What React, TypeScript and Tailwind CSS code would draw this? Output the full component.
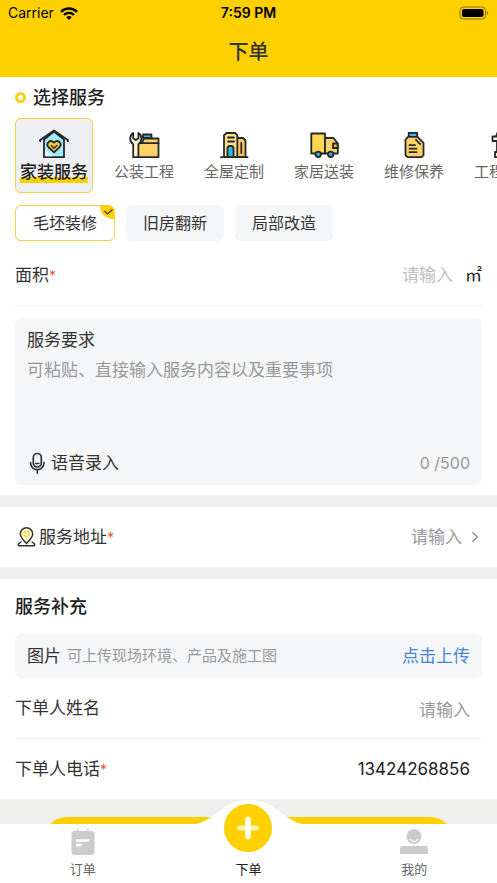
import { useState } from "react"
import type { ReactNode } from "react"
import { ChevronRight } from "lucide-react"

interface Service {
  label: string
  icon: ReactNode
}

interface TabButtonProps {
  label: string
  active?: boolean
  icon: ReactNode
}

function ServiceIcon({ children }: { children: ReactNode }) {
  return (
    <svg
      viewBox="0 0 30 30"
      className="w-[30px] h-[30px] shrink-0 overflow-visible"
      fill="none"
      stroke="#25282b"
      strokeWidth="1.8"
      strokeLinejoin="round"
      strokeLinecap="round"
      aria-hidden="true"
    >
      {children}
    </svg>
  )
}

const services: Service[] = [
  {
    label: "家装服务",
    icon: (
      <ServiceIcon>
        <path d="M5 10.5 15 2.5l10 8v17.7H5z" fill="#a5ecfa" />
        <path d="M6 20v7.3h8z" fill="#e3fafe" stroke="none" />
        <path d="M1.200 12.300V11L15 1.500 28.800 11v1.300" strokeWidth="2" />
        <path
          d="M15 23.400l-5.200-4.900c-3.800-4 1.200-8.900 5.200-4.800 4-4.100 9 .8 5.200 4.800z"
          fill="#fdc441"
        />
        <path d="M12.500 16.800l2.500 2.400 3-2.700" strokeWidth="1.4" />
      </ServiceIcon>
    ),
  },
  {
    label: "公装工程",
    icon: (
      <ServiceIcon>
        <path d="M14 9V5.500h8.500V9z" fill="#39b5de" />
        <path d="M9 28.200V14h4l2-4.500h14.500v18.700z" fill="#fdd368" />
        <path d="M13.500 14.200h16" />
        <path
          d="M4.200 28.200V15.300C.2 12.800.2 6.200 4.200 4v5.300l2.600 1.800 2.600-1.800V4c4 2.200 4 8.800 0 11.300v12.900z"
          fill="#fff3cf"
        />
      </ServiceIcon>
    ),
  },
  {
    label: "全屋定制",
    icon: (
      <ServiceIcon>
        <path d="M18 9h6l2.500 2.500v16.700H18z" fill="#fdc65a" />
        <path d="M5 28.200v-22L7.500 4H16l2.300 2.200v22z" fill="#fde08a" />
        <path d="M8.500 28.200V18.500L10 17h3l1.500 1.500v9.700z" fill="#39b5de" />
        <path d="M9 8.500h6M9 12.500h6M22.300 14v10M2 28.200h26.500" />
      </ServiceIcon>
    ),
  },
  {
    label: "家居送装",
    icon: (
      <ServiceIcon>
        <path d="M2.300 4.500H16v20H2.300z" fill="#fdd54f" />
        <path d="M16 9h8.500l4.300 5.500v10H16z" fill="#fdd368" />
        <path d="M28.500 14.500H24v4.500h4.800z" fill="#fdb92e" />
        <circle cx="9.2" cy="25.3" r="2.7" fill="#39b5de" />
        <circle cx="21.7" cy="25.3" r="2.7" fill="#39b5de" />
      </ServiceIcon>
    ),
  },
  {
    label: "维修保养",
    icon: (
      <ServiceIcon>
        <path d="M9.700 3.800h8.500v4H9.700z" fill="#39b5de" />
        <path d="M6.500 10.500L9 7.800h9.500l6 6v12.400l-2 2h-14l-2-2z" fill="#fdd368" />
        <path d="M10.500 16.200h5.500M10.500 19.700h7M10.500 23.200h7M17 10.800l4.200 4.300" />
      </ServiceIcon>
    ),
  },
  {
    label: "工程监理",
    icon: (
      <ServiceIcon>
        <path d="M7 7.500L8.500 3.500h13L23 7.500z" fill="#39b5de" />
        <path d="M3.500 7.500h23V12h-23z" fill="#fff3cf" />
        <path d="M8 12h14v11H8z" fill="#fdd368" />
        <path d="M6 23h18v5.200H6z" fill="#fff3cf" />
      </ServiceIcon>
    ),
  },
]

const serviceTypes = ["毛坯装修", "旧房翻新", "局部改造"]

function Required() {
  return <span className="text-sm text-[#f0562e]">*</span>
}

function StatusBar() {
  return (
    <div className="h-[26px] px-2 grid grid-cols-3 items-center text-sm text-black">
      <div className="flex items-center gap-1.5">
        <span>Carrier</span>
        <svg viewBox="0 0 18 13" className="w-[18px] h-[13px]" fill="none" stroke="#000" strokeWidth="2.4">
          <path d="M1 4.800a11.300 11.300 0 0 1 16 0" />
          <path d="M4 8a7 7 0 0 1 10 0" />
          <path d="M6.300 10.300a3.800 3.800 0 0 1 5.400 0L9 13z" fill="#000" stroke="none" />
        </svg>
      </div>
      <span className="text-center font-semibold">7:59 PM</span>
      <svg viewBox="0 0 30 14" className="w-[30px] h-[14px] justify-self-end">
        <rect x="1" y="1" width="25.5" height="12" rx="3.5" fill="none" stroke="#8a7200" />
        <rect x="3" y="3" width="21.5" height="8" rx="1.8" fill="#000" />
        <path d="M28 5v4c1.600-.6 1.600-3.400 0-4z" fill="#8a7200" />
      </svg>
    </div>
  )
}

function TabButton({ label, active, icon }: TabButtonProps) {
  return (
    <button
      type="button"
      className={`flex flex-col items-center justify-end pb-1 text-[13px] leading-5 ${
        active ? "text-[#222]" : "text-[#666]"
      }`}
    >
      {icon}
      <span>{label}</span>
    </button>
  )
}

function TabBar() {
  return (
    <nav className="relative shrink-0 h-[59px] bg-white grid grid-cols-3 grid-rows-1">
      {/* white hump behind the round add button */}
      <svg
        viewBox="0 0 140 25"
        className="absolute left-1/2 -translate-x-1/2 -top-6 w-[140px] h-[25px]"
        aria-hidden="true"
      >
        <path d="M8 25C36 25 40 0 70 0s34 25 62 25z" fill="#fff" />
      </svg>
      <TabButton
        label="订单"
        icon={
          <svg viewBox="0 0 24 26" className="shrink-0 w-6 h-[26px] mb-1" aria-hidden="true">
            <rect x="0.5" y="2" width="23" height="24" rx="3" fill="#ccc" />
            <path d="M6.500 0v4M17 0v4" stroke="#ccc" strokeWidth="1.6" />
            <path d="M5 11.500h13M5 16h6" stroke="#fff" strokeWidth="2.4" />
          </svg>
        }
      />
      <TabButton
        label="下单"
        active
        icon={
          <svg viewBox="0 0 48 48" className="relative shrink-0 w-12 h-12 mb-[7px]" aria-hidden="true">
            <circle cx="24" cy="24" r="24" fill="#ffd000" />
            <path d="M15.500 24h17" stroke="#fff1b0" strokeWidth="5" strokeLinecap="round" />
            <path d="M24 15.500v17" stroke="#fff" strokeWidth="5.5" strokeLinecap="round" />
          </svg>
        }
      />
      <TabButton
        label="我的"
        icon={
          <svg viewBox="0 0 28 26" className="shrink-0 w-7 h-[26px] mb-1" aria-hidden="true">
            <circle cx="14" cy="7.5" r="7.5" fill="#ccc" />
            <path d="M10.500 10.500c1.800 2.800 5.200 2.800 7 0" fill="none" stroke="#fff" strokeWidth="1.3" strokeLinecap="round" />
            <path d="M0 25v-5.500q0-2.500 2.500-2.500h23q2.500 0 2.500 2.500V25z" fill="#ccc" />
          </svg>
        }
      />
    </nav>
  )
}

export default function App() {
  const [service, setService] = useState(0)
  const [type, setType] = useState(0)
  const [demand, setDemand] = useState("")
  const [phone, setPhone] = useState("13424268856")

  return (
    <div className="h-screen flex flex-col overflow-hidden bg-[#efefee] text-[17px] leading-6 text-[#333] font-[Inter,'Noto_Sans_CJK_SC',sans-serif]">
      <header className="shrink-0 h-[77px] bg-[#ffd000]">
        <StatusBar />
        <h1 className="h-[51px] flex items-center justify-center text-xl font-medium">下单</h1>
      </header>

      <main className="flex-1 min-h-0 overflow-y-auto [scrollbar-width:none]">
        <section className="bg-white px-[15px] pb-2.5">
          <h2 className="h-[41px] flex items-center gap-[7px] text-lg font-medium text-[#222]">
            <span className="w-[11px] h-[11px] rounded-full border-3 border-[#f7cf1d]" />
            选择服务
          </h2>

          <div className="-mr-[15px] flex gap-3 overflow-x-auto [scrollbar-width:none]">
            {services.map((item, index) => (
              <button
                key={item.label}
                type="button"
                onClick={() => setService(index)}
                className={`shrink-0 w-[78px] h-[75px] pt-2.5 flex flex-col items-center rounded-md border whitespace-nowrap ${
                  service === index
                    ? "border-[#f3d03c] bg-[#edeff2] text-[17px] font-medium text-[#222]"
                    : "border-transparent text-[15px] text-[#666]"
                }`}
              >
                {item.icon}
                <span
                  className={`mt-0.5 leading-[22px] ${
                    service === index
                      ? "bg-linear-to-t from-[#fbd000] from-25% to-transparent to-25%"
                      : ""
                  }`}
                >
                  {item.label}
                </span>
              </button>
            ))}
          </div>

          <div className="mt-3 flex gap-[11px]">
            {serviceTypes.map((label, index) => (
              <button
                key={label}
                type="button"
                onClick={() => setType(index)}
                className={`relative h-9 rounded-md border text-base overflow-hidden ${
                  type === index
                    ? "w-[100px] border-[#f3d03c] bg-white"
                    : "w-[98px] border-[#f5f6f8] bg-[#f5f6f8]"
                }`}
              >
                {label}
                {type === index && (
                  <svg viewBox="0 0 14 13" className="absolute top-0 right-0 w-[14px] h-[13px]" aria-hidden="true">
                    <path d="M0 0h14v13C6 13 0 8 0 0z" fill="#fbd000" />
                    <path d="M4.500 5l3 3 5-4.500" fill="none" stroke="#333" strokeWidth="1.2" />
                  </svg>
                )}
              </button>
            ))}
          </div>

          <div className="h-[65px] pt-1 flex items-center border-b border-[#eee]">
            <label htmlFor="area" className="shrink-0">
              面积
              <Required />
            </label>
            <input
              id="area"
              placeholder="请输入"
              className="flex-1 min-w-0 text-right outline-none placeholder:text-[#bfbfbf]"
            />
            <span className="ml-3 text-[#222]">㎡</span>
          </div>

          <div className="mt-3 px-3 py-2.5 rounded-md bg-[#f5f6f8]">
            <label htmlFor="demand" className="block">
              服务要求
            </label>
            <textarea
              id="demand"
              maxLength={500}
              value={demand}
              onChange={(e) => setDemand(e.target.value)}
              placeholder="可粘贴、直接输入服务内容以及重要事项"
              className="block w-full h-[89px] mt-1.5 resize-none outline-none placeholder:text-[#999]"
            />
            <div className="mt-1 flex items-center justify-between">
              <button type="button" className="flex items-center gap-1">
                <svg
                  viewBox="0 0 20 22"
                  className="w-5 h-[22px]"
                  fill="none"
                  stroke="#333"
                  strokeWidth="1.7"
                  strokeLinecap="round"
                  aria-hidden="true"
                >
                  <rect x="6.3" y="1.5" width="8" height="13.5" rx="4" />
                  <path d="M3.500 10.500c0 9.500 13.500 9.500 13.500 0M10.300 18v3M8.800 11.500h3" />
                </svg>
                语音录入
              </button>
              <span className="text-base text-[#999]">{demand.length} /500</span>
            </div>
          </div>
        </section>

        <section className="mt-3 h-[60px] bg-white px-[15px] flex items-center">
          <svg viewBox="0 0 24 24" className="w-6 h-6 shrink-0" fill="none" stroke="#333" strokeWidth="1.5" aria-hidden="true">
            <path d="M11.500 18.500C8 15 5.300 12 5.300 9a6.200 6.200 0 0 1 12.400 0c0 3-2.700 6-6.200 9.500z" fill="#fffbe0" />
            <circle cx="11.5" cy="8.8" r="2.5" stroke="#f0dc3c" />
            <path d="M6 17l-2.200 1.500c-1 1.700-.5 2.300.5 2.300h14.400c1 0 1.500-.6.5-2.300L17 17" strokeLinecap="round" />
          </svg>
          <label htmlFor="address" className="shrink-0">
            服务地址
            <Required />
          </label>
          <input
            id="address"
            placeholder="请输入"
            className="flex-1 min-w-0 text-right outline-none placeholder:text-[#999]"
          />
          <ChevronRight className="ml-1 -mr-0.5 w-[18px] h-[18px] text-[#888]" strokeWidth={1.5} />
        </section>

        <section className="mt-3 bg-white px-[15px]">
          <h2 className="h-[55px] flex items-center text-lg font-medium text-[#222]">服务补充</h2>
          <div className="h-11 px-3 flex items-center rounded-md bg-[#f5f6f8]">
            <span>图片</span>
            <span className="ml-1.5 flex-1 text-[15px] text-[#999]">可上传现场环境、产品及施工图</span>
            <button type="button" className="shrink-0 text-[#4585d6]">
              点击上传
            </button>
          </div>
          <div className="h-[61px] pr-3 flex items-center border-b border-[#f2f2f2]">
            <label htmlFor="name" className="shrink-0">
              下单人姓名
            </label>
            <input
              id="name"
              placeholder="请输入"
              className="flex-1 min-w-0 pt-1 text-right outline-none placeholder:text-[#999]"
            />
          </div>
          <div className="h-[60px] pr-3 flex items-center">
            <label htmlFor="phone" className="shrink-0">
              下单人电话
              <Required />
            </label>
            <input
              id="phone"
              type="tel"
              value={phone}
              onChange={(e) => setPhone(e.target.value)}
              className="flex-1 min-w-0 text-right outline-none text-[#222]"
            />
          </div>
        </section>

        <div className="px-[43px] py-[18px]">
          <button type="button" aria-label="提交" className="block w-full h-12 rounded-full bg-[#ffd000]" />
        </div>
      </main>

      <TabBar />
    </div>
  )
}
